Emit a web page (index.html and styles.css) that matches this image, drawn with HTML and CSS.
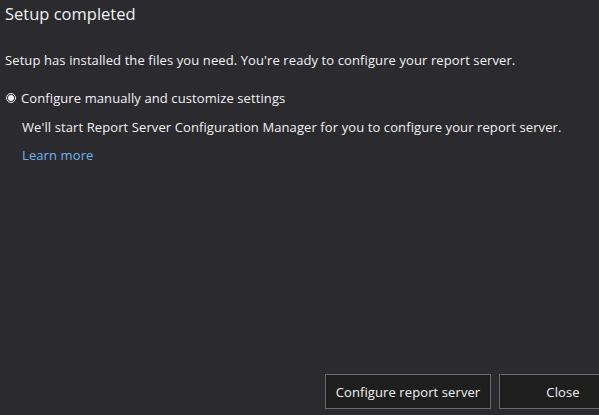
FILE: index.html
```html
<!DOCTYPE html>
<html>
<head>
<meta charset="utf-8">
<link rel="stylesheet" href="styles.css">
</head>
<body>
<div class="page">
  <h1 class="title">Setup completed</h1>
  <p class="intro">Setup has installed the files you need. You're ready to configure your report server.</p>
  <div class="option">
    <label class="radio-row">
      <span class="radio"><span class="dot"></span></span>
      <span class="label">Configure manually and customize settings</span>
    </label>
    <p class="desc">We'll start Report Server Configuration Manager for you to configure your report server.</p>
    <a class="link" href="#">Learn more</a>
  </div>
  <div class="spacer"></div>
  <div class="actions">
    <button class="btn btn-config">Configure report server</button>
    <button class="btn btn-close">Close</button>
  </div>
</div>
</body>
</html>
```

FILE: styles.css
```css
html, body {
  margin: 0;
  padding: 0;
  height: 100%;
}
body {
  background: #2b2a2f;
  color: #f2f2f2;
  font-family: "Open Sans", "Noto Sans", sans-serif;
  font-size: 13px;
  letter-spacing: 0.1px;
  overflow: hidden;
}
.page {
  height: 415px;
  display: flex;
  flex-direction: column;
  padding: 0 0 0 5px;
  box-sizing: border-box;
}
.title {
  margin: 2px 0 0 0;
  font-size: 16.5px;
  font-weight: 400;
  line-height: 24px;
  letter-spacing: 0;
  color: #f2f2f2;
}
.intro {
  margin: 25px 0 0 0;
  line-height: 18px;
}
.option {
  margin-top: 20px;
}
.radio-row {
  display: flex;
  align-items: center;
  gap: 5px;
  line-height: 18px;
}
.radio {
  width: 10px;
  height: 10px;
  border: 1px solid #f2f2f2;
  border-radius: 50%;
  display: flex;
  align-items: center;
  justify-content: center;
  box-sizing: border-box;
  margin-left: 1px;
}
.dot {
  width: 6px;
  height: 6px;
  border-radius: 50%;
  background: #f2f2f2;
}
.desc {
  margin: 11px 0 0 17px;
  line-height: 18px;
}
.link {
  display: block;
  margin: 10px 0 0 17px;
  line-height: 18px;
  color: #6cb4ee;
  text-decoration: none;
}
.spacer {
  flex: 1;
}
.actions {
  display: flex;
  justify-content: flex-end;
  gap: 8px;
  margin-bottom: 6px;
  margin-right: -28px;
}
.btn {
  font-family: inherit;
  font-size: 13px;
  letter-spacing: 0.1px;
  color: #f2f2f2;
  background: #1e1e1f;
  border: 1px solid #6a6a6a;
  height: 35px;
  padding: 0;
}
.btn-config {
  width: 166px;
}
.btn-close {
  width: 128px;
}
```
